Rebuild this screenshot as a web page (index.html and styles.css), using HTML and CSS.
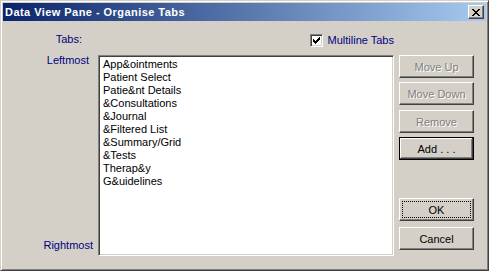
FILE: index.html
```html
<!DOCTYPE html>
<html lang="en">
<head>
  <meta charset="UTF-8">
  <title>Data View Pane - Organise Tabs</title>
  <link rel="stylesheet" href="styles.css">
</head>
<body>

  <div class="window">
    <div class="titlebar">
      <span class="title">Data View Pane - Organise Tabs</span>
      <button class="close" aria-label="Close">
        <svg width="8" height="7" viewBox="0 0 8 7" shape-rendering="crispEdges">
          <path fill="#000" d="M0 0h2v1H0z M6 0h2v1H6z M1 1h2v1H1z M5 1h2v1H5z M2 2h4v1H2z M3 3h2v1H3z M2 4h4v1H2z M1 5h2v1H1z M5 5h2v1H5z M0 6h2v1H0z M6 6h2v1H6z"/>
        </svg>
      </button>
    </div>

    <div class="dialog">
      <div class="tabs-label">Tabs:</div>
      <label class="multiline">
        <span class="check">
          <svg width="7" height="7" viewBox="0 0 7 7" shape-rendering="crispEdges">
            <path fill="#000" d="M6 0h1v1H6z M5 1h2v1H5z M0 2h1v1H0z M4 2h3v1H4z M0 3h2v1H0z M3 3h3v1H3z M0 4h5v1H0z M1 5h3v1H1z M2 6h1v1H2z"/>
          </svg>
        </span>
        Multiline Tabs
      </label>

      <div class="ends">
        <span class="leftmost">Leftmost</span>
        <span class="rightmost">Rightmost</span>
      </div>

      <ul class="listbox">
        <li>App&amp;ointments</li>
        <li>Patient Select</li>
        <li>Patie&amp;nt Details</li>
        <li>&amp;Consultations</li>
        <li>&amp;Journal</li>
        <li>&amp;Filtered List</li>
        <li>&amp;Summary/Grid</li>
        <li>&amp;Tests</li>
        <li>Therap&amp;y</li>
        <li>G&amp;uidelines</li>
      </ul>

      <div class="actions">
        <button class="btn" disabled>Move Up</button>
        <button class="btn" disabled>Move Down</button>
        <button class="btn remove" disabled>Remove</button>
        <button class="btn default">Add . . .</button>
        <div class="confirm">
          <button class="btn focused">OK</button>
          <button class="btn">Cancel</button>
        </div>
      </div>
    </div>
  </div>

</body>
</html>
```

FILE: styles.css
```css
:root {
  --face: #d4d0c8;
  --shadow: #808080;
  --dark: #404040;
  --navy: #000080;
  --font: "Liberation Sans", Arial, sans-serif;
}
*, *::before, *::after { box-sizing: border-box; margin:0; padding:0; }
html, body { width:489px; height:271px; background:var(--face); font:11px/13px var(--font); overflow:hidden; }

.window {
  width:489px; height:271px;
  border:1px solid; border-color:var(--face) var(--dark) var(--dark) var(--face);
  box-shadow:inset 1px 1px #fff, inset -1px -1px var(--shadow);
  padding:2px;
  display:flex; flex-direction:column;
}

.titlebar {
  height:18px;
  background:linear-gradient(to right, #0a246a, #a6caf0);
  display:flex; align-items:center; justify-content:space-between;
  padding:0 2px;
}
.title { color:#fff; font-weight:bold; font-size:11px; letter-spacing:.45px; }
.close {
  width:16px; height:14px;
  background:var(--face);
  border:1px solid; border-color:#fff var(--dark) var(--dark) #fff;
  box-shadow:inset -1px -1px var(--shadow);
  display:flex; align-items:center; justify-content:center;
}
.close svg { display:block; }

.dialog {
  display:grid;
  grid-template-columns:90px 296px 75px;
  grid-template-rows:34px 201px;
  column-gap:5px;
  color:var(--navy);
}

.tabs-label { grid-column:1; grid-row:1; justify-self:end; padding:12px 11px 0 0; }
.multiline {
  grid-column:2; grid-row:1;
  justify-self:end; align-self:start;
  display:flex; align-items:center; gap:5px;
  padding-top:13px;
}
.check {
  width:13px; height:13px;
  background:#fff;
  border:1px solid; border-color:var(--shadow) #fff #fff var(--shadow);
  box-shadow:inset 1px 1px var(--dark), inset -1px -1px var(--face);
  display:flex; align-items:center; justify-content:center;
}
.check svg { display:block; }

.ends {
  grid-column:1; grid-row:2;
  display:flex; flex-direction:column; justify-content:space-between; align-items:flex-end;
  margin:-1px 0 4px;
}
.leftmost { padding-right:4px; }

.listbox {
  grid-column:2; grid-row:2;
  list-style:none;
  background:#fff; color:#000;
  border:1px solid; border-color:var(--shadow) #fff #fff var(--shadow);
  box-shadow:inset 1px 1px var(--dark), inset -1px -1px var(--face);
  padding:2px 2px 0 4px;
}

.actions { grid-column:3; grid-row:2; display:flex; flex-direction:column; gap:4px; }
.btn {
  height:23px; width:75px;
  background:var(--face); color:#000;
  font:11px var(--font);
  border:1px solid; border-color:#fff var(--dark) var(--dark) #fff;
  box-shadow:inset -1px -1px var(--shadow), inset 1px 1px var(--face);
}
.btn:disabled { color:var(--shadow); text-shadow:1px 1px #fff; }
.remove { margin-top:1px; }
.btn.default {
  border-color:#000;
  box-shadow:inset -1px -1px var(--dark), inset 1px 1px #fff, inset -2px -2px var(--shadow);
}
.btn.focused { outline:1px dotted #000; outline-offset:-4px; }
.confirm { margin-top:auto; margin-bottom:6px; display:flex; flex-direction:column; gap:6px; }
```
